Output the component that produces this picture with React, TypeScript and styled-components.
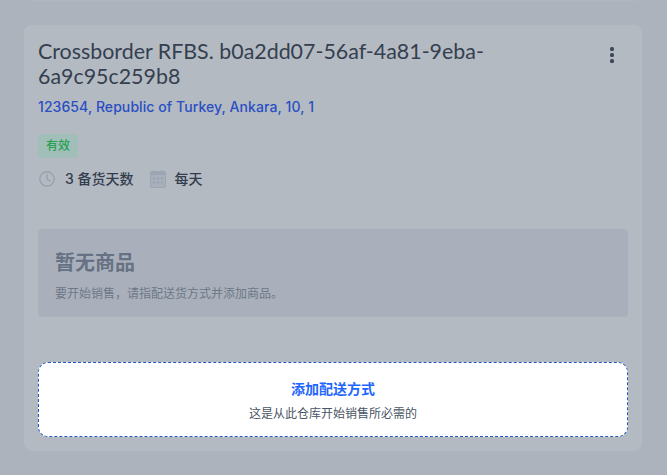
import styled, { createGlobalStyle } from "styled-components";

const GlobalStyle = createGlobalStyle`
  html, body {
    margin: 0;
    height: 100%;
    overflow: hidden;
    background: #acb3bd;
  }
`;

const cjk = `Inter, "Noto Sans CJK SC", sans-serif`;

export default function App() {
  return (
    <>
      <GlobalStyle />
      <Page>
        <PrevCardEdge />
        <Card>
          <Header>
            <Title>Crossborder RFBS. b0a2dd07-56af-4a81-9eba-6a9c95c259b8</Title>
            <MenuButton aria-label="menu">
              <Dot />
              <Dot />
              <Dot />
            </MenuButton>
          </Header>
          <Address>123654, Republic of Turkey, Ankara, 10, 1</Address>
          <Badge>有效</Badge>
          <MetaRow>
            <MetaItem>
              <svg width="18" height="18" viewBox="0 0 18 18" fill="none">
                <circle cx="9" cy="9" r="7.2" stroke="#98a2b0" strokeWidth="1.4" />
                <path d="M9 4.8V9.4L12 11.2" stroke="#98a2b0" strokeWidth="1.4" strokeLinecap="round" />
              </svg>
              <MetaText>3 备货天数</MetaText>
            </MetaItem>
            <MetaItem>
              <svg width="16" height="18" viewBox="0 0 16 18" fill="none">
                <rect x="0.5" y="1.5" width="15" height="16" rx="1.5" fill="#a8b0bb" stroke="#9ca5b2" />
                <rect x="0.5" y="1.5" width="15" height="3.5" fill="#9ca5b2" />
                <path d="M4 0V2.5M12 0V2.5" stroke="#9ca5b2" strokeWidth="1.2" />
                <path
                  d="M3 7.5h2.2v2H3zM6.9 7.5h2.2v2H6.9zM10.8 7.5H13v2h-2.2zM3 11.5h2.2v2H3zM6.9 11.5h2.2v2H6.9zM10.8 11.5H13v2h-2.2z"
                  fill="#98a2b0"
                />
              </svg>
              <MetaText>每天</MetaText>
            </MetaItem>
          </MetaRow>
          <EmptyBox>
            <EmptyTitle>暂无商品</EmptyTitle>
            <EmptyText>要开始销售，请指配送货方式并添加商品。</EmptyText>
          </EmptyBox>
          <AddBox>
            <AddTitle>添加配送方式</AddTitle>
            <AddText>这是从此仓库开始销售所必需的</AddText>
          </AddBox>
        </Card>
      </Page>
    </>
  );
}

const Page = styled.div`
  width: 667px;
  height: 475px;
  overflow: hidden;
  background: #acb3bd;
`;

const PrevCardEdge = styled.div`
  height: 1px;
  margin: 0 30px 24px 28px;
  background: #b0b7bf;
`;

const Card = styled.div`
  width: 618px;
  height: 426px;
  margin-left: 24px;
  box-sizing: border-box;
  padding: 14px;
  background: #b3bac1;
  border-radius: 8px;
  display: flex;
  flex-direction: column;
`;

const Header = styled.div`
  display: flex;
  justify-content: space-between;
  align-items: flex-start;
`;

const Title = styled.h2`
  margin: 0;
  width: 480px;
  font: 400 21.4px/25px Lato, sans-serif;
  color: #353f50;
`;

const MenuButton = styled.div`
  width: 6px;
  margin: 8px 13px 0 0;
  display: flex;
  flex-direction: column;
  gap: 2px;
  align-items: center;
`;

const Dot = styled.span`
  width: 4px;
  height: 4px;
  border-radius: 1.5px;
  background: #3d4858;
`;

const Address = styled.div`
  margin-top: 9px;
  font: 500 14px/18px ${cjk};
  letter-spacing: 0.08px;
  color: #2a4fc4;
`;

const Badge = styled.div`
  align-self: flex-start;
  margin-top: 18px;
  width: 40px;
  height: 24px;
  border-radius: 3px;
  background: #a1bfb8;
  color: #28a052;
  font: 500 12px/24px ${cjk};
  text-align: center;
`;

const MetaRow = styled.div`
  display: flex;
  align-items: center;
  gap: 16px;
  margin-top: 12px;
`;

const MetaItem = styled.div`
  display: flex;
  align-items: center;
  gap: 9px;
`;

const MetaText = styled.span`
  font: 500 14px/18px ${cjk};
  color: #333d4e;
`;

const EmptyBox = styled.div`
  margin-top: 41px;
  height: 89px;
  box-sizing: border-box;
  padding: 20px 17px 0;
  border-radius: 4px;
  background: #a9b0bc;
`;

const EmptyTitle = styled.div`
  font: 700 20px/28px ${cjk};
  color: #667283;
`;

const EmptyText = styled.div`
  margin-top: 9px;
  font: 400 12px/16px ${cjk};
  color: #6d7886;
`;

const AddBox = styled.div`
  margin-top: 45px;
  height: 76px;
  box-sizing: border-box;
  border: 1px dashed #2456c8;
  border-radius: 10px;
  background: #fff;
  display: flex;
  flex-direction: column;
  align-items: center;
  padding-top: 16px;
`;

const AddTitle = styled.div`
  font: 600 14px/20px ${cjk};
  color: #1f66ff;
`;

const AddText = styled.div`
  margin-top: 7px;
  font: 400 12px/16px ${cjk};
  color: #4a5565;
`;
